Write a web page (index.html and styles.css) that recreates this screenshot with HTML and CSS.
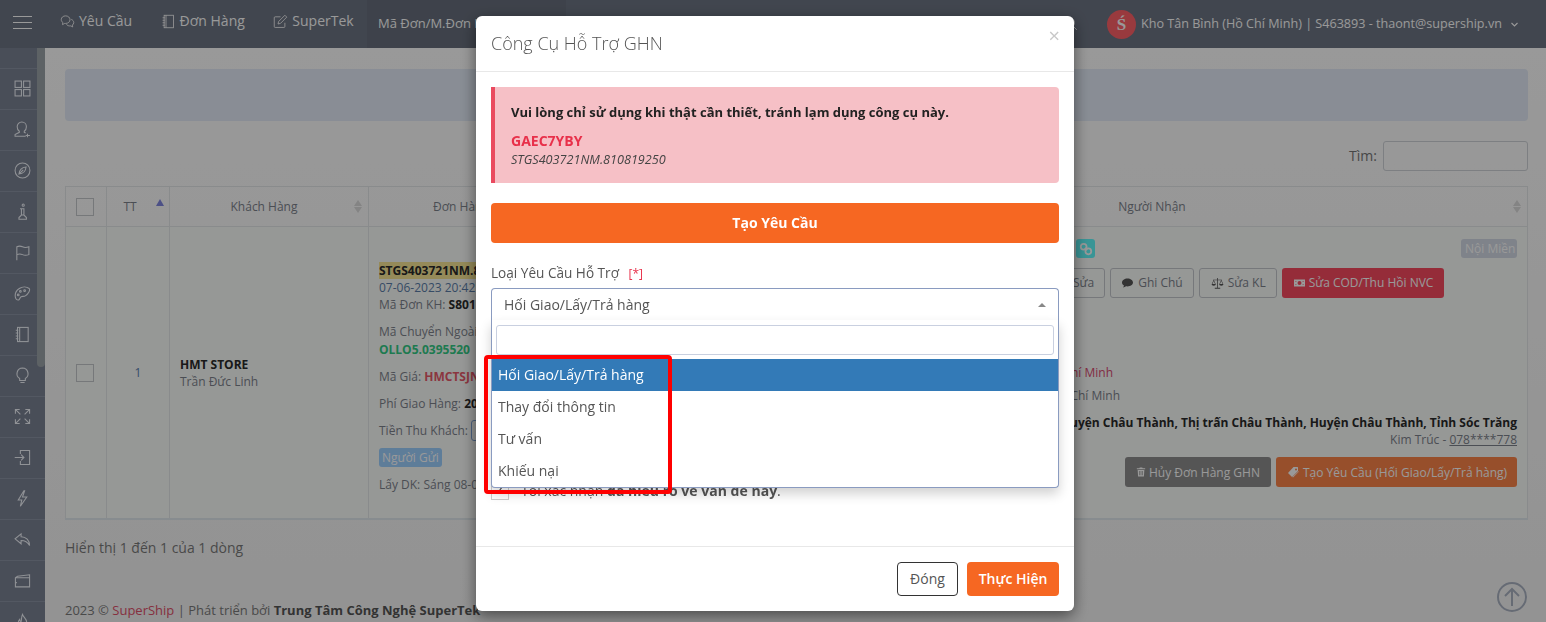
FILE: index.html
```html
<!DOCTYPE html>
<html lang="vi">
<head>
<meta charset="utf-8">
<title>Công Cụ Hỗ Trợ GHN</title>
<link rel="stylesheet" href="styles.css">
</head>
<body>
<svg class="defs" aria-hidden="true">
  <symbol id="i-chat" viewBox="0 0 24 24"><path d="M9 3C5 3 2 5.500 2 9c0 2 1 3.500 2.500 4.600L4 17l3.600-2c.5.1 1 .1 1.400.1 4 0 7-2.600 7-6S13 3 9 3z"/><path d="M18 8.500c2.400 1 4 3 4 5.200 0 1.600-.9 3-2.200 4l.5 3-3.200-1.700c-3 .5-5.600-.6-6.800-2.500"/></symbol>
  <symbol id="i-note" viewBox="0 0 24 24"><rect x="5" y="2" width="15" height="20"/><path d="M8 2v20M2.500 6H6M2.500 10H6M2.500 14H6M2.500 18H6"/></symbol>
  <symbol id="i-edit" viewBox="0 0 24 24"><path d="M19 14v6a1.500 1.500 0 0 1-1.500 1.500h-14A1.500 1.500 0 0 1 2 20V6a1.500 1.500 0 0 1 1.500-1.500H12"/><path d="M9 12 19 2l3 3-10 10-4 1z"/></symbol>
  <symbol id="i-grid" viewBox="0 0 24 24"><rect x="1.500" y="1.500" width="9" height="9"/><rect x="13.500" y="1.500" width="9" height="9"/><rect x="1.500" y="13.500" width="9" height="9"/><rect x="13.500" y="13.500" width="9" height="9"/></symbol>
  <symbol id="i-user" viewBox="0 0 24 24"><path d="M11 1.500a6.500 6.500 0 0 0-6.500 6.500c0 3 1 5 3 6.500V16l-6 3v2.500h15M11 1.500A6.500 6.500 0 0 1 17.500 8c0 3-1 5-3 6.500V16l2 1M19 18v5M16.500 20.500h6"/></symbol>
  <symbol id="i-compass" viewBox="0 0 24 24"><circle cx="12" cy="12" r="10.500"/><path d="M17 7c-5.500.5-9.500 4.500-10 10 5.500-.5 9.500-4.500 10-10zM7 17l6-6"/></symbol>
  <symbol id="i-info" viewBox="0 0 24 24"><circle cx="13" cy="3" r="1.500"/><path d="M8.500 8H14v9M10.500 8v9M7 23v-2.500L10.500 17h3.500l3.500 3.500V23z"/></symbol>
  <symbol id="i-flag" viewBox="0 0 24 24"><path d="M4 23V4c4-2 6-1 8 0s5 1.500 9 0v11c-4 1.500-7 1-9 0s-4-2-8 0"/></symbol>
  <symbol id="i-palette" viewBox="0 0 24 24"><path d="M21.500 5C18 2.500 12 2 7.500 5 3 8 1 13 2 17.500c.6 2.800 3 4.500 5 3.300 1.600-1 1.200-3.500 3-4.300 2-.9 4 .3 6.500-1.500 3-2.200 7-7.500 5-10z"/><circle cx="9" cy="9" r="1.200"/><circle cx="15" cy="8" r="1.200"/><circle cx="6" cy="14" r="1.200"/></symbol>
  <symbol id="i-bulb" viewBox="0 0 24 24"><path d="M12 1.500a8 8 0 0 0-4 14.800V19h8v-2.700a8 8 0 0 0-4-14.800zM9 22h6"/></symbol>
  <symbol id="i-expand" viewBox="0 0 24 24"><path d="M2 8V2h6M2 2l7 7M16 2h6v6M22 2l-7 7M2 16v6h6M2 22l7-7M22 16v6h-6M22 22l-7-7"/></symbol>
  <symbol id="i-login" viewBox="0 0 24 24"><path d="M9 7V2h13v20H9v-5M1 12h13M10 8l4 4-4 4"/></symbol>
  <symbol id="i-bolt" viewBox="0 0 24 24"><path d="M14 1 6 14h5l-2 9 9-13h-6l3-9z"/></symbol>
  <symbol id="i-reply" viewBox="0 0 24 24"><path d="M10 4 1.500 11l8.500 7v-4.500c5 0 9 1.500 12 7 0-7-5-12.500-12-12.500z"/></symbol>
  <symbol id="i-folder" viewBox="0 0 24 24"><path d="M2 8v13h20V4L5 6zM2 8h20M2 15h2"/></symbol>
  <symbol id="i-fire" viewBox="0 0 24 24"><path d="M12 2c1 4 6 6 6 12a6 6 0 0 1-12 0c0-2 1-4 2-5 0 2 1 3 2 3 1-3 0-6 2-10z"/></symbol>
  <symbol id="i-search" viewBox="0 0 24 24"><circle cx="10" cy="10" r="8"/><path d="m16 16 6 6"/></symbol>
  <symbol id="i-chevron" viewBox="0 0 24 24"><path d="m4 8 8 8 8-8"/></symbol>
  <symbol id="i-up" viewBox="0 0 30 30"><circle cx="15" cy="15" r="14"/><path d="M15 24V7M8 14l7-7 7 7"/></symbol>
  <symbol id="i-link" viewBox="0 0 24 24"><circle cx="8" cy="8" r="5"/><circle cx="16" cy="16" r="5"/><path d="m10 10 4 4"/></symbol>
  <symbol id="f-comment" viewBox="0 0 24 24"><path d="M12 3C6 3 1 6.500 1 11c0 2.500 1.500 4.700 4 6.200-.3 1.500-1 2.800-2 3.800 2.300-.2 4.500-1.200 6-2.500 1 .2 2 .3 3 .3 6 0 11-3.500 11-7.800S18 3 12 3z"/></symbol>
  <symbol id="f-scale" viewBox="0 0 24 24"><path d="M11.300 2h1.400v18H17v1.500H7V20h4.300z"/><path d="M4 5h16v1H4z"/><path d="M5 5 1.500 13h1L5 7.500 7.500 13h1zM19 5l-3.500 8h1L19 7.500l2.500 5.500h1z"/><path d="M1 13h8a4 3 0 0 1-8 0zM15 13h8a4 3 0 0 1-8 0z"/></symbol>
  <symbol id="f-money" viewBox="0 0 24 24"><path fill-rule="evenodd" d="M1 5h22v14H1zm11 3a4 4 0 1 0 0 8 4 4 0 0 0 0-8zM4 8v2a2 2 0 0 0 2-2zm14 0a2 2 0 0 0 2 2V8zM4 14v2h2a2 2 0 0 0-2-2zm16 0a2 2 0 0 0-2 2h2z"/></symbol>
  <symbol id="f-trash" viewBox="0 0 24 24"><path d="M9 1h6l1 2h6v2.500H2V3h6zM4 7h16l-1 16H5zm4 2.500V20h1.500V9.500zm3.200 0V20h1.600V9.500zm3.300 0V20H16V9.500z"/></symbol>
  <symbol id="f-tag" viewBox="0 0 24 24"><path d="M12 2h8l1 1v7L9 22l-8-8zM17 5a2 2 0 1 0 0 4 2 2 0 0 0 0-4z"/><path d="M23 6v5L11 23l-1-1 13-12z"/></symbol>
</svg>

<header class="topbar">
  <div class="burger"><span></span><span></span><span></span></div>
  <nav class="nav">
    <a class="nav-item"><svg class="ico ico-nav"><use href="#i-chat"/></svg>Yêu Cầu</a>
    <a class="nav-item"><svg class="ico ico-nav"><use href="#i-note"/></svg>Đơn Hàng</a>
    <a class="nav-item"><svg class="ico ico-nav"><use href="#i-edit"/></svg>SuperTek</a>
  </nav>
  <div class="top-search">Mã Đơn/M.Đơn KH</div>
  <div class="top-right">
    <svg class="ico ico-top-search"><use href="#i-search"/></svg>
    <div class="avatar">Ś</div>
    <span class="user">Kho Tân Bình (Hồ Chí Minh) | S463893 - thaont@supership.vn</span>
    <svg class="ico ico-chev"><use href="#i-chevron"/></svg>
  </div>
</header>

<div class="layout">
  <aside class="sidebar">
    <a class="side-item"><svg class="ico ico-side"><use href="#i-grid"/></svg></a>
    <a class="side-item"><svg class="ico ico-side"><use href="#i-user"/></svg></a>
    <a class="side-item"><svg class="ico ico-side"><use href="#i-compass"/></svg></a>
    <a class="side-item"><svg class="ico ico-side"><use href="#i-info"/></svg></a>
    <a class="side-item"><svg class="ico ico-side"><use href="#i-flag"/></svg></a>
    <a class="side-item"><svg class="ico ico-side"><use href="#i-palette"/></svg></a>
    <a class="side-item"><svg class="ico ico-side"><use href="#i-note"/></svg></a>
    <a class="side-item"><svg class="ico ico-side"><use href="#i-bulb"/></svg></a>
    <a class="side-item"><svg class="ico ico-side"><use href="#i-expand"/></svg></a>
    <a class="side-item"><svg class="ico ico-side"><use href="#i-login"/></svg></a>
    <a class="side-item"><svg class="ico ico-side"><use href="#i-bolt"/></svg></a>
    <a class="side-item"><svg class="ico ico-side"><use href="#i-reply"/></svg></a>
    <a class="side-item"><svg class="ico ico-side"><use href="#i-folder"/></svg></a>
    <a class="side-item"><svg class="ico ico-side"><use href="#i-fire"/></svg></a>
    <div class="side-thumb"></div>
  </aside>

  <main class="main">
    <div class="banner"></div>
    <div class="filter"><label class="filter-label">Tìm:</label><div class="filter-input"></div></div>

    <table class="grid">
      <colgroup>
        <col class="c-check"><col class="c-tt"><col class="c-cust"><col class="c-order"><col class="c-mid"><col class="c-recv">
      </colgroup>
      <thead>
        <tr>
          <th class="head-check"><span class="box"></span></th>
          <th class="sort"><span class="tt-label">TT</span><span class="arrow-active"></span></th>
          <th class="sort">Khách Hàng<span class="arrows"></span></th>
          <th class="sort order-head">Đơn Hàng<span class="arrows"></span></th>
          <th class="sort"><span class="arrows"></span></th>
          <th class="sort recv-head">Người Nhận<span class="arrows"></span></th>
        </tr>
      </thead>
      <tbody>
        <tr>
          <td class="center"><span class="box"></span></td>
          <td class="center num">1</td>
          <td class="cust"><b class="strong">HMT STORE</b><br>Trần Đức Linh</td>
          <td class="order">
            <p class="para"><mark class="code">STGS403721NM.810819250</mark><br><span class="date">07-06-2023 20:42</span><br>Mã Đơn KH: <b class="strong">S801</b></p>
            <p class="para">Mã Chuyển Ngoài:<br><b class="green">OLLO5.0395520</b></p>
            <p class="para">Mã Giá: <b class="maroon">HMCTSJN</b></p>
            <p class="para">Phí Giao Hàng: <b class="strong">20.000</b></p>
            <p class="para fixed">Tiền Thu Khách: <span class="mini-input"></span></p>
            <p class="para fixed"><span class="tag-blue">Người Gửi</span></p>
            <p class="para">Lấy DK: Sáng 08-06</p>
          </td>
          <td></td>
          <td class="recv">
            <div class="row-tags">
              <span class="tag-teal"><svg class="ico ico-link"><use href="#i-link"/></svg></span>
              <span class="tag-grey">Nội Miền</span>
            </div>
            <div class="row-btns">
              <a class="btn-line">Sửa</a>
              <a class="btn-line"><svg class="ico-f"><use href="#f-comment"/></svg>Ghi Chú</a>
              <a class="btn-line"><svg class="ico-f ico-scale"><use href="#f-scale"/></svg>Sửa KL</a>
              <a class="btn-fill btn-red"><svg class="ico-f"><use href="#f-money"/></svg>Sửa COD/Thu Hồi NVC</a>
            </div>
            <div class="place place-a">Thành phố Hồ Chí Minh</div>
            <div class="place place-b">Thành phố Hồ Chí Minh</div>
            <div class="addr"><b class="strong">Huyện Châu Thành, Thị trấn Châu Thành, Huyện Châu Thành, Tỉnh Sóc Trăng</b><br>Kim Trúc - <u>078****778</u></div>
            <div class="row-actions">
              <a class="btn-fill btn-dark"><svg class="ico-f ico-trash"><use href="#f-trash"/></svg>Hủy Đơn Hàng GHN</a>
              <a class="btn-fill btn-orange"><svg class="ico-f"><use href="#f-tag"/></svg>Tạo Yêu Cầu (Hối Giao/Lấy/Trả hàng)</a>
            </div>
          </td>
        </tr>
      </tbody>
    </table>

    <div class="info">Hiển thị 1 đến 1 của 1 dòng</div>
    <footer class="foot">2023 © <span class="brand">SuperShip</span> | Phát triển bởi <b class="foot-b">Trung Tâm Công Nghệ SuperTek</b></footer>
  </main>
</div>

<a class="to-top"><svg class="ico ico-up"><use href="#i-up"/></svg></a>

<div class="backdrop"></div>

<div class="modal-wrap">
  <section class="modal">
    <div class="modal-head">
      <h4 class="modal-title">Công Cụ Hỗ Trợ GHN</h4>
      <span class="close">×</span>
    </div>
    <div class="modal-body">
      <div class="alert">
        <p class="alert-main">Vui lòng chỉ sử dụng khi thật cần thiết, tránh lạm dụng công cụ này.</p>
        <p class="alert-code">GAEC7YBY</p>
        <p class="alert-sub">STGS403721NM.810819250</p>
      </div>
      <button class="btn-create">Tạo Yêu Cầu</button>
      <label class="field-label">Loại Yêu Cầu Hỗ Trợ <span class="req">[*]</span></label>
      <div class="select">
        <div class="select-box">Hối Giao/Lấy/Trả hàng<span class="caret"></span></div>
        <div class="drop">
          <div class="drop-search"><div class="drop-input"></div></div>
          <ul class="options">
            <li class="option active">Hối Giao/Lấy/Trả hàng</li>
            <li class="option">Thay đổi thông tin</li>
            <li class="option">Tư vấn</li>
            <li class="option">Khiếu nại</li>
          </ul>
        </div>
        <div class="mark-box"></div>
      </div>
      <div class="confirm"><span class="check">✓</span><span>Tôi xác nhận <b>đã hiểu rõ về vấn đề này</b>.</span></div>
    </div>
    <div class="modal-foot">
      <button class="btn-close">Đóng</button>
      <button class="btn-do">Thực Hiện</button>
    </div>
  </section>
</div>
</body>
</html>
```

FILE: styles.css
```css
* { box-sizing: border-box; }
html, body { margin: 0; height: 622px; overflow: hidden; }
body { font-family: "Open Sans", "Noto Sans", sans-serif; font-size: 12px; line-height: 17.14px; color: #7d838c; background: #fff; }
.defs { display: none; }
a { text-decoration: none; color: inherit; }
p { margin: 0; }

.ico { fill: none; stroke: currentColor; stroke-width: 1.5; display: block; flex: none; }
.ico-f { width: 13px; height: 12px; fill: currentColor; flex: none; margin-right: 3px; }

/* top bar */
.topbar { height: 48px; background: #6d7584; display: flex; align-items: stretch; color: #fff; }
.burger { width: 60px; padding: 16px 0 0 13px; display: flex; flex-direction: column; gap: 5px; }
.burger span { display: block; width: 19px; height: 1px; background: #fff; }
.nav { display: flex; padding-bottom: 6px; width: 307px; white-space: nowrap; }
.nav-item { display: flex; align-items: center; font-size: 14px; margin-right: 28.5px; }
.ico-nav { width: 15px; height: 15px; margin-right: 4px; stroke-width: 1.300; }
.top-search { width: 199px; background: #686f7d; font-size: 13px; line-height: 46px; padding-left: 11px; white-space: nowrap; overflow: hidden; }
.top-right { flex: 1; display: flex; align-items: center; padding-left: 498px; font-size: 12.6px; }
.ico-top-search { width: 14px; height: 14px; margin-right: 29px; }
.avatar { width: 29px; height: 29px; border-radius: 50%; background: #ff6168; color: #fff; font: bold 17px/29px "Liberation Serif", serif; text-align: center; margin-right: 5px; }
.user { white-space: nowrap; }
.ico-chev { width: 9px; height: 9px; margin-left: 8px; stroke-width: 3; }

/* layout */
.layout { display: flex; height: 574px; }
.sidebar { width: 45px; flex: none; background: #7b8293; padding-top: 20px; position: relative; overflow: hidden; color: #f0f4fa; }
.side-item { display: flex; height: 41px; justify-content: center; align-items: center; border-top: 1px solid #8b93a3; padding-bottom: 1px; }
.ico-side { width: 17px; height: 17px; stroke-width: 1.500; }
.side-thumb { position: absolute; left: 37px; top: 0; width: 8px; height: 319px; background: #9ca3a8; border-radius: 0 0 4px 4px; }

.main { flex: 1; min-width: 0; padding: 21px 18px 0 20px; background: linear-gradient(#fff, #f5f5f5); }
.banner { height: 52px; background: #e4ecf8; border-radius: 4px; }
.filter { display: flex; justify-content: flex-end; align-items: center; margin-top: 20px; font-size: 14px; color: #777; }
.filter-label { margin-right: 6px; }
.filter-input { width: 145px; height: 30px; border: 1px solid #d0d4d9; border-radius: 3px; }

/* table */
.grid { width: 100%; table-layout: fixed; border-collapse: collapse; margin-top: 15px; border: 1px solid #e4e8ea; }
.c-check { width: 41px; } .c-tt { width: 63px; } .c-cust { width: 199px; } .c-order { width: 190px; } .c-mid { width: 218px; }
.grid th { height: 40px; font-weight: 400; border: 1px solid #e4e8ea; position: relative; text-align: center; padding: 0 10px; color: #7d838c; }
.grid .head-check { padding: 0; }
.grid .sort { padding-right: 20px; }
.grid .order-head { padding-right: 15px; }
.grid td { height: 292px; border-left: 1px solid #e4e8ea; border-right: 1px solid #e4e8ea; border-bottom: 2px solid #e2eaee; padding: 0; background: #fbfdfb; white-space: nowrap; overflow: hidden; }
.grid th:nth-child(5), .grid td:nth-child(5) { border-left: 0; }
.box { display: block; width: 18px; height: 18px; border: 1px solid #c5c8cc; margin: 0 0 0 10px; }
td .box { margin-top: 2px; }
.center { text-align: center; }
.num { color: #5c7fb0; }
.arrows { position: absolute; right: 6px; top: 13px; width: 8px; height: 13px; }
.arrows::before, .arrows::after { content: ""; position: absolute; left: 0; border-left: 4px solid transparent; border-right: 4px solid transparent; }
.arrows::before { top: 0; border-bottom: 6px solid #dcdcdc; }
.arrows::after { bottom: 0; border-top: 6px solid #dcdcdc; }
.arrow-active { position: absolute; right: 5px; top: 12px; border-left: 4px solid transparent; border-right: 4px solid transparent; border-bottom: 7px solid #7f86e0; }
.tt-label { margin-left: 6px; margin-right: 12px; }
.grid .recv-head { padding-right: 10px; }
.cust { padding: 2px 0 0 10px !important; }
.strong { color: #2a2a2a; font-weight: 700; }
.order { vertical-align: top; padding: 35px 0 0 10px !important; }
.para { margin-bottom: 10px; }
.fixed { height: 17px; display: flex; align-items: center; }
.code { background: #f9e795; color: #2a2a2a; font-weight: 700; padding: 0; }
.date { color: #5a7da8; }
.green { color: #33cc85; }
.maroon { color: #e85a6a; }
.mini-input { display: inline-block; width: 30px; height: 21px; border: 1px solid #7fa3d8; border-radius: 3px; margin-left: 3px; }
.tag-blue { display: inline-block; height: 19px; line-height: 19px; padding: 0 3px; background: #9dd0ff; border-radius: 3px; color: #fff; }

.recv { vertical-align: top; padding: 12px 10px 0 !important; }
.row-tags { display: flex; justify-content: space-between; padding-left: 289px; height: 19px; }
.tag-teal { width: 19px; height: 19px; background: #60f8fa; border-radius: 3px; color: #fff; display: flex; align-items: center; justify-content: center; }
.ico-link { width: 14px; height: 14px; stroke-width: 3; }
.tag-grey { height: 19px; line-height: 19px; padding: 0 4px; background: #d4dbe6; color: #fff; border-radius: 3px; width: 56px; white-space: nowrap; }
.row-btns { display: flex; gap: 5px; margin-top: 10px; padding-left: 275px; }
.btn-line, .btn-fill { height: 30px; display: flex; align-items: center; padding: 0 11px; border-radius: 3px; white-space: nowrap; }
.btn-line { border: 1px solid #c5c9ce; color: #7d838c; padding: 0 10px; }
.btn-line .ico-f { color: #555; margin-right: 4px; }
.btn-line .ico-scale { width: 15px; height: 13px; margin-right: 3px; }
.btn-fill { color: #fff; }
.btn-red { background: #f84a60; }
.place { padding-left: 0; line-height: 17px; }
.place-a { width: 326px; text-align: right; margin-top: 66px; color: #d84a70; }
.place-b { width: 333px; text-align: right; margin-top: 6px; }
.addr { text-align: right; margin-top: 10px; }
.row-actions { display: flex; justify-content: flex-end; gap: 5px; margin-top: 9px; }
.btn-dark { background: #8e8e8e; width: 146px; }
.ico-trash { width: 10px; }
.btn-orange { background: #fc8449; width: 241px; }

.info { margin-top: 18px; font-size: 14px; line-height: 20px; color: #7b7b7b; }
.foot { margin-top: 43px; font-size: 13px; line-height: 18px; color: #7b7b7b; white-space: nowrap; }
.brand { color: #e0506a; }
.foot-b { color: #555; font-weight: 700; }

.to-top { position: fixed; left: 1497px; top: 582px; width: 30px; height: 30px; color: #aab2c2; }
.ico-up { width: 30px; height: 30px; stroke-width: 2; }

/* modal */
.backdrop { position: fixed; inset: 0; background: rgba(0, 0, 0, .4); }
.modal-wrap { position: fixed; inset: 0; padding: 16px 0 0 476px; }
.modal { width: 598px; height: 595px; background: #fff; border-radius: 6px; box-shadow: 0 5px 15px rgba(0, 0, 0, .5); font-size: 14px; line-height: 20px; color: #555; display: flex; flex-direction: column; position: relative; }
.modal-head { height: 56px; border-bottom: 1px solid #e8e8e8; padding: 0 15px; position: relative; }
.modal-title { margin: 0; font-size: 18px; font-weight: 300; line-height: 54px; color: #555; }
.close { position: absolute; right: 14px; top: 10px; font-size: 20px; color: #c8c8c8; }
.modal-body { flex: 1; padding: 15px 15px 0; position: relative; }
.alert { height: 96px; background: #f6c0c6; border-left: 4px solid #ea4a5f; border-radius: 0 4px 4px 0; padding: 15px 0 0 16px; }
.alert-main { font-size: 13px; font-weight: 700; line-height: 20px; color: #222; }
.alert-code { font-size: 14px; font-weight: 700; color: #e8304a; margin-top: 9px; line-height: 20px; }
.alert-sub { font-size: 12.65px; font-style: italic; line-height: 16px; color: #444; }
.btn-create { display: block; width: 100%; height: 40px; margin-top: 20px; padding: 0 0 2px; border: 0; border-radius: 4px; background: #f66722; color: #fff; font: 700 14px "Open Sans", sans-serif; }
.field-label { display: block; margin-top: 20px; font-size: 13.6px; line-height: 20px; }
.req { color: #e8304a; font-size: 12px; margin-left: 6px; }
.select { position: relative; margin-top: 4px; height: 32px; }
.select-box { height: 33px; border: 1px solid #8a9bc0; border-bottom: 0; border-radius: 4px 4px 0 0; padding: 6px 12px; position: relative; }
.caret { position: absolute; right: 12px; top: 14px; border-left: 4px solid transparent; border-right: 4px solid transparent; border-bottom: 4px solid #888; }
.drop { position: absolute; left: 0; right: 0; top: 32px; height: 168px; background: #fff; border: 1px solid #8a9bc0; border-top: 0; border-radius: 0 0 4px 4px; box-shadow: 0 6px 12px rgba(0, 0, 0, .18); z-index: 2; }
.drop-search { padding: 5px 4px 4px; }
.drop-input { height: 30px; border: 1px solid #c9d0e0; border-radius: 3px; }
.options { list-style: none; margin: 0; padding: 0; }
.option { height: 32px; line-height: 32px; padding-left: 6px; }
.active { background: #337ab7; color: #fff; }
.mark-box { position: absolute; left: -7px; top: 67px; width: 188px; height: 139px; border: 4px solid #f00; border-radius: 4px; z-index: 3; }
.confirm { margin-top: 161px; display: flex; align-items: center; height: 20px; }
.check { width: 18px; height: 18px; border: 1px solid #ccc; margin: 0 12px 0 0; color: #555; text-align: center; line-height: 14px; font-size: 14px; }
.modal-foot { height: 65px; border-top: 1px solid #e8e8e8; padding: 15px; display: flex; justify-content: flex-end; gap: 9px; }
.btn-close, .btn-do { height: 34px; padding: 0 0 2px; border-radius: 4px; font: 14px "Open Sans", sans-serif; }
.btn-close { width: 61px; background: #fff; border: 1px solid #333; color: #555; }
.btn-do { width: 92px; background: #f66722; border: 0; color: #fff; font-weight: 600; }
```
